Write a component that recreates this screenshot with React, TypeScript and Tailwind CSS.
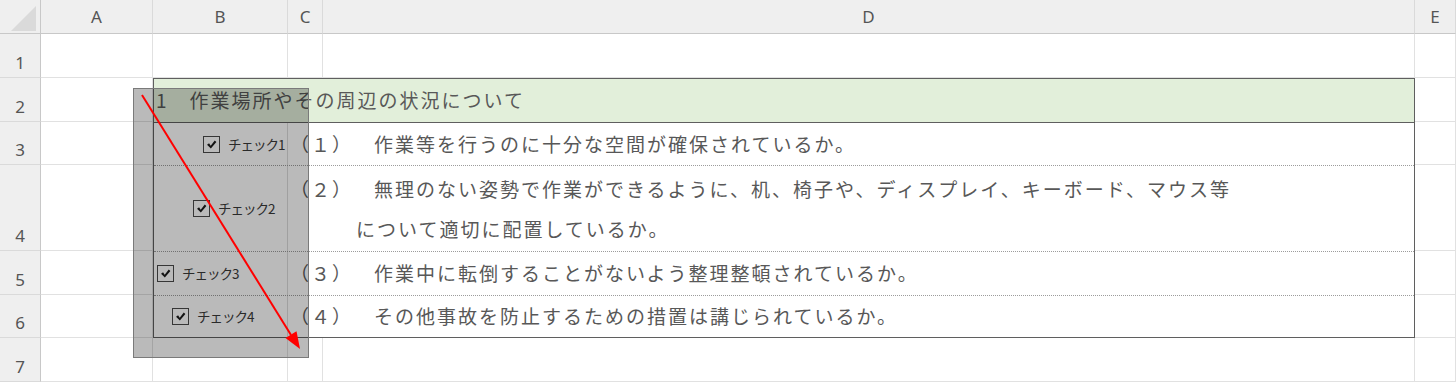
import React from "react";

const COL_HEADERS = ["A", "B", "C", "D", "E"];
const ROW_NUMBERS = [1, 2, 3, 4, 5, 6, 7];

// cells covered by the bordered table (B2:D6)
function inTable(row: number, col: number) {
	return row >= 2 && row <= 6 && col >= 1 && col <= 3;
}

function CheckBox({ label, indent }: { label: string; indent: string }) {
	return (
		<div className={`flex items-center gap-[8px] ${indent}`}>
			<span className="flex h-[17px] w-[17px] items-center justify-center border border-[#4a4a4a] bg-white/10">
				<svg width="13" height="13" viewBox="0 0 16 16">
					<polygon points="2.5,8.2 5,6.4 7,9.6 12,3.2 14,4.8 7.2,13" fill="#1c1c1c" />
				</svg>
			</span>
			<span className="text-[13.5px] tracking-[-1px] text-[#3a3a3a]">{label}</span>
		</div>
	);
}

function Row({
	className,
	check,
	children,
}: {
	className: string;
	check: React.ReactNode;
	children: React.ReactNode;
}) {
	return (
		<div className={`flex border-b border-dotted border-[#9c9c9c] ${className}`}>
			<div className="flex w-[134px] shrink-0 items-center border-r border-[#dcdcdc]">{check}</div>
			<div className="flex flex-1 flex-col justify-center pl-[2px]">{children}</div>
		</div>
	);
}

function ChecklistTable() {
	return (
		<div className="col-start-3 col-end-6 row-start-3 row-end-8 flex flex-col border border-[#5f5f5f] bg-white text-[19px] tracking-[2px] text-[#585858] [text-spacing-trim:space-all]">
			<div className="flex h-[44px] shrink-0 items-center border-b border-[#5f5f5f] bg-[#e2efda] pl-[2px]">
				<span>1　作業場所やその周辺の状況について</span>
			</div>
			<Row className="h-[43px] shrink-0" check={<CheckBox label="チェック1" indent="pl-[49px]" />}>
				<span>（１）　作業等を行うのに十分な空間が確保されているか。</span>
			</Row>
			<Row className="h-[86px] shrink-0" check={<CheckBox label="チェック2" indent="pl-[39px]" />}>
				<span className="leading-[40px]">（２）　無理のない姿勢で作業ができるように、机、椅子や、ディスプレイ、キーボード、マウス等</span>
				<span className="pl-[66px] leading-[40px]">について適切に配置しているか。</span>
			</Row>
			<Row className="h-[44px] shrink-0" check={<CheckBox label="チェック3" indent="pl-[3px]" />}>
				<span>（３）　作業中に転倒することがないよう整理整頓されているか。</span>
			</Row>
			<div className="flex flex-1">
				<div className="flex w-[134px] shrink-0 items-center border-r border-[#dcdcdc]">
					<CheckBox label="チェック4" indent="pl-[18px]" />
				</div>
				<div className="flex flex-1 items-center pl-[2px]">
					<span>（４）　その他事故を防止するための措置は講じられているか。</span>
				</div>
			</div>
		</div>
	);
}

export default function App() {
	return (
		<div className="relative h-[382px] w-[1456px] overflow-hidden bg-white font-['Noto_Sans_CJK_JP',sans-serif]">
			<div className="grid grid-cols-[41px_112px_135px_35px_1092px_1fr] grid-rows-[34px_44px_44px_43px_86px_44px_43px_44px]">
				{/* corner */}
				<div className="relative border-r border-b border-[#c8c8c8] bg-[#efefef]">
					<svg className="absolute left-[11px] top-[6px]" width="25" height="25" viewBox="0 0 25 25">
						<polygon points="25,0 25,25 0,25" fill="#dadada" />
					</svg>
				</div>
				{COL_HEADERS.map((h) => (
					<div
						key={h}
						className="flex items-center justify-center border-r border-b border-r-[#dadada] border-b-[#c8c8c8] bg-[#efefef] font-['Noto_Sans',sans-serif] text-[17px] text-[#555]"
					>
						{h}
					</div>
				))}
				{ROW_NUMBERS.map((r) => (
					<React.Fragment key={r}>
						<div className="flex items-end justify-center border-r border-b border-r-[#c8c8c8] border-b-[#dadada] bg-[#efefef] pb-[6px] font-['Noto_Sans',sans-serif] text-[17px] leading-none text-[#555]">
							{r}
						</div>
						{COL_HEADERS.map((_, c) =>
							inTable(r, c) ? null : (
								<div key={c} className="border-r border-b border-[#e1e1e1]" />
							),
						)}
					</React.Fragment>
				))}
				<ChecklistTable />
			</div>

			{/* selection rectangle drawn over the sheet */}
			<div className="absolute left-[133px] top-[88px] h-[270px] w-[176px] border border-[#7a7a7a] bg-[rgba(0,0,0,0.27)]" />
			<svg className="pointer-events-none absolute left-0 top-0" width="1456" height="382">
				<line x1="142" y1="95" x2="291" y2="335" stroke="#ff0000" strokeWidth="2" />
				<polygon points="300,349 285.5,338 296.5,331.2" fill="#ff0000" />
			</svg>
		</div>
	);
}
